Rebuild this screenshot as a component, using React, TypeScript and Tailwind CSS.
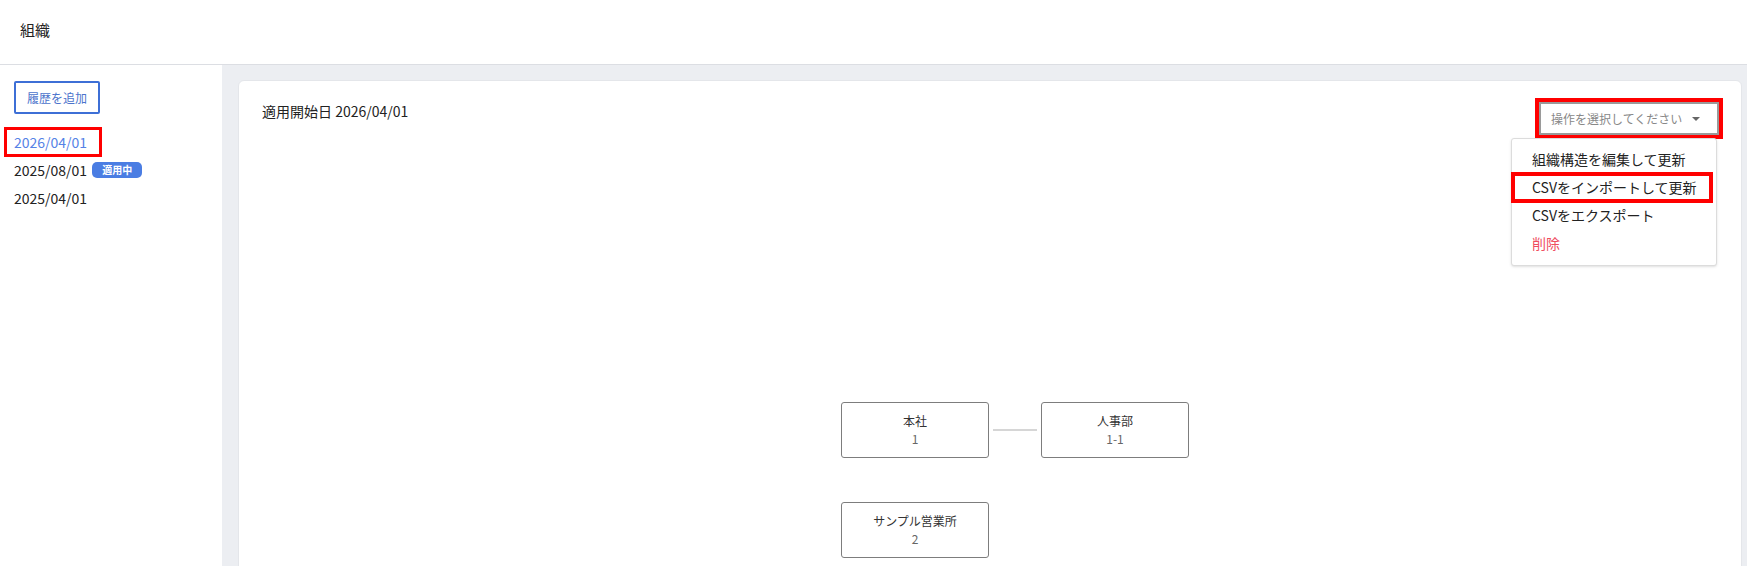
const histories = [
  { date: "2026/04/01", selected: true, active: false },
  { date: "2025/08/01", selected: false, active: true },
  { date: "2025/04/01", selected: false, active: false },
];

const actions = [
  { label: "組織構造を編集して更新", danger: false, marked: false },
  { label: "CSVをインポートして更新", danger: false, marked: true },
  { label: "CSVをエクスポート", danger: false, marked: false },
  { label: "削除", danger: true, marked: false },
];

const OrgNode = ({ name, code, left, top }: { name: string; code: string; left: string; top: string }) => {
  return (
    <div
      className={`absolute ${left} ${top} flex h-[56px] w-[148px] flex-col items-center justify-center rounded-[3px] border border-[#7d7d7d] bg-white text-[12px] leading-[18px]`}
    >
      <span className="text-[#333]">{name}</span>
      <span className="text-[#666]">{code}</span>
    </div>
  );
};

const App = () => {
  return (
    <div className="h-[566px] w-full overflow-hidden bg-white font-['Noto_Sans_CJK_JP','Noto_Sans',sans-serif] text-[#222]">
      <header className="flex h-[65px] items-center border-b border-[#dcdee3] px-5 pb-[3px] text-[15px]">
        組織
      </header>

      <div className="flex h-[501px]">
        <aside className="w-[222px] shrink-0 bg-white pl-[14px] pt-4">
          <button className="h-[33px] w-[86px] rounded-[2px] border-2 border-[#3d6fd6] text-[12px] text-[#4b73cc]">
            履歴を追加
          </button>
          <ul className="mt-[14px] text-sm">
            {histories.map((h) => (
              <li
                key={h.date}
                className={`relative flex h-7 items-center ${h.selected ? "text-[#5582e6]" : "text-[#222]"}`}
              >
                {h.date}
                {h.active && (
                  <span className="ml-[5px] flex h-4 w-[50px] items-center justify-center rounded-[5px] bg-[#4a7de3] text-[10px] font-bold text-white">
                    適用中
                  </span>
                )}
                {h.selected && (
                  <span className="absolute left-[-10px] top-[-1px] h-[30px] w-[98px] border-[3px] border-[#ff0000]" />
                )}
              </li>
            ))}
          </ul>
        </aside>

        <main className="flex-1 bg-[#eceef2] pl-4 pr-[5px] pt-[15px]">
          <div className="relative h-[560px] rounded-md border border-[#e4e6ea] bg-white pl-[23px] pr-[22px] pt-5">
            <div className="flex items-start justify-between">
              <p className="text-sm leading-5">適用開始日 2026/04/01</p>

              <div className="relative mt-px">
                <div className="flex h-[33px] w-[180px] items-center justify-between border-2 border-[#9a9a9a] bg-white pl-[10px] pr-[17px] text-[12px] text-[#888]">
                  <span>操作を選択してください</span>
                  <span className="h-0 w-0 border-x-4 border-t-[4px] border-x-transparent border-t-[#666]" />
                </div>
                <span className="absolute -inset-1 border-4 border-[#ff0000]" />

                <ul className="absolute right-[2px] top-[36px] z-10 w-[206px] rounded-[3px] border border-[#dcdcdc] bg-white pb-2 pt-[6px] text-sm shadow-sm">
                  {actions.map((a) => (
                    <li
                      key={a.label}
                      className={`relative flex h-7 items-center pl-5 ${a.danger ? "text-[#ef4d5f]" : "text-[#222]"}`}
                    >
                      {a.label}
                      {a.marked && (
                        <span className="absolute bottom-[-2px] left-[-1px] right-[3px] top-[-1px] border-4 border-[#ff0000]" />
                      )}
                    </li>
                  ))}
                </ul>
              </div>
            </div>

            <OrgNode name="本社" code="1" left="left-[602px]" top="top-[321px]" />
            <div className="absolute left-[754px] top-[348px] h-[2px] w-[44px] bg-[#d6d6d6]" />
            <OrgNode name="人事部" code="1-1" left="left-[802px]" top="top-[321px]" />
            <OrgNode name="サンプル営業所" code="2" left="left-[602px]" top="top-[421px]" />
          </div>
        </main>
      </div>
    </div>
  );
};

export default App;
